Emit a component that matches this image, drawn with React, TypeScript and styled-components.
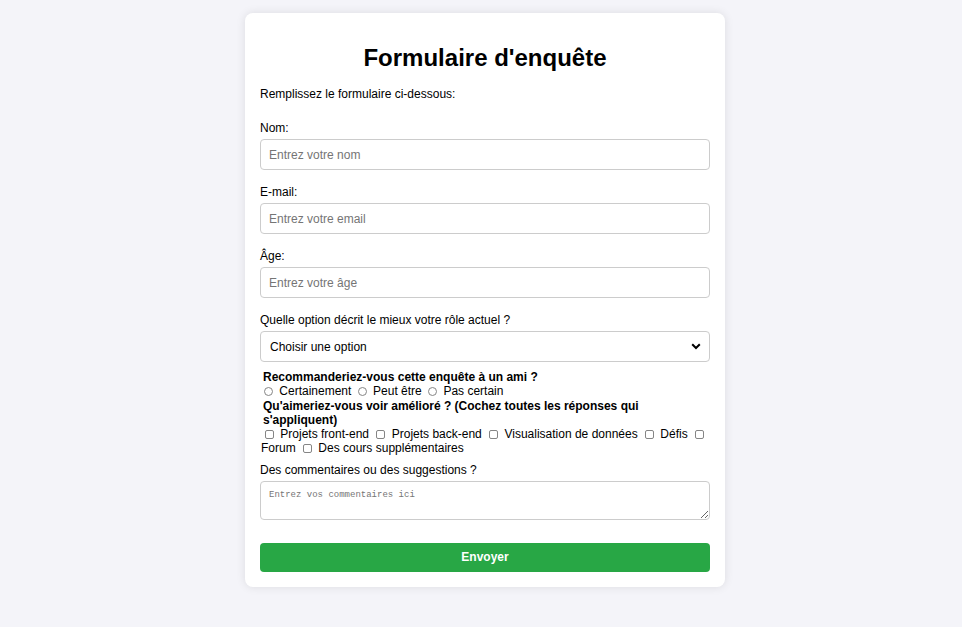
import React from 'react';
import styled, { createGlobalStyle } from 'styled-components';

const GlobalStyle = createGlobalStyle`
  html, body { margin: 0; padding: 0; background: #f4f4f9; }
  body { font-family: "Liberation Sans", Arial, sans-serif; font-size: 12px; color: #000; }
  * { box-sizing: border-box; }
`;

const Page = styled.div`
  display: flex;
  justify-content: center;
  padding: 13px 0 40px 8px;
`;

const Card = styled.form`
  width: 480px;
  background: #fff;
  border-radius: 8px;
  box-shadow: 0 0 10px rgba(0, 0, 0, 0.1);
  padding: 15px;
  display: flex;
  flex-direction: column;
`;

const Title = styled.h1`
  margin: 16px 0 16px;
  font-size: 24px;
  font-weight: bold;
  text-align: center;
  line-height: 27.6px;
`;

const Intro = styled.p`
  margin: 0 0 20px;
  line-height: 13.8px;
`;

const Group = styled.div<{ $gap?: number }>`
  display: flex;
  flex-direction: column;
  margin-bottom: ${(p) => (p.$gap ?? 15)}px;
`;

const Label = styled.label`
  display: block;
  line-height: 14px;
  margin-bottom: 4px;
`;

const TextInput = styled.input`
  width: 100%;
  height: 31px;
  padding: 0 8px;
  border: 1px solid #ccc;
  border-radius: 4px;
  font-family: "Liberation Sans", Arial, sans-serif;
  font-size: 12px;
  color: #000;
  outline: none;
  &::placeholder { color: #757575; }
`;

const SelectWrap = styled.div`
  position: relative;
  width: 100%;
`;

const Select = styled.select`
  appearance: none;
  width: 100%;
  height: 31px;
  padding: 0 8px 0 9px;
  border: 1px solid #ccc;
  border-radius: 4px;
  background: #fff;
  font-family: "Liberation Sans", Arial, sans-serif;
  font-size: 12px;
  color: #000;
  outline: none;
`;

const Chevron = styled.svg`
  position: absolute;
  right: 9px;
  top: 12px;
  pointer-events: none;
`;

const Questions = styled.div`
  line-height: 14.1px;
  padding-left: 1px;
  margin: 1px 0 8px;
`;

const Question = styled.div`
  font-weight: bold;
  padding-left: 2px;
`;

const Options = styled.div``;

const Radio = styled.input.attrs({ type: 'radio' })`
  appearance: none;
  display: inline-block;
  width: 9px;
  height: 9px;
  margin: 0 3px 0 3px;
  border: 1px solid #858585;
  border-radius: 50%;
  background: #fff;
  vertical-align: -1px;
`;

const Check = styled.input.attrs({ type: 'checkbox' })`
  appearance: none;
  display: inline-block;
  width: 9px;
  height: 9px;
  margin: 0 3px 0 4px;
  border: 1px solid #858585;
  border-radius: 2px;
  background: #fff;
  vertical-align: -1px;
`;

const TextArea = styled.textarea`
  width: 100%;
  height: 39px;
  padding: 8px;
  border: 1px solid #ccc;
  border-radius: 4px;
  font-family: "Liberation Mono", "Courier New", monospace;
  font-size: 9px;
  line-height: 10px;
  outline: none;
  resize: vertical;
  &::placeholder { color: #757575; }
`;

const Submit = styled.button`
  margin-top: 23px;
  width: 100%;
  height: 29px;
  border: none;
  border-radius: 4px;
  background: #28a745;
  color: #fff;
  font-family: "Liberation Sans", Arial, sans-serif;
  font-size: 12px;
  font-weight: bold;
  cursor: pointer;
`;

export default function App() {
  return (
    <>
      <GlobalStyle />
      <Page>
        <Card onSubmit={(e) => e.preventDefault()}>
          <Title>Formulaire d'enquête</Title>
          <Intro>Remplissez le formulaire ci-dessous:</Intro>

          <Group>
            <Label htmlFor="nom">Nom:</Label>
            <TextInput id="nom" type="text" placeholder="Entrez votre nom" />
          </Group>
          <Group>
            <Label htmlFor="email">E-mail:</Label>
            <TextInput id="email" type="email" placeholder="Entrez votre email" />
          </Group>
          <Group>
            <Label htmlFor="age">Âge:</Label>
            <TextInput id="age" type="number" placeholder="Entrez votre âge" />
          </Group>
          <Group $gap={7}>
            <Label htmlFor="role">Quelle option décrit le mieux votre rôle actuel ?</Label>
            <SelectWrap>
              <Select id="role" defaultValue="">
                <option value="">Choisir une option</option>
                <option value="etudiant">Étudiant</option>
                <option value="pro">Professionnel</option>
              </Select>
              <Chevron width="10" height="7" viewBox="0 0 10 7">
                <path d="M1.2 1.2 L5 5 L8.8 1.2" fill="none" stroke="#000" strokeWidth="2" />
              </Chevron>
            </SelectWrap>
          </Group>

          <Questions>
            <Question>Recommanderiez-vous cette enquête à un ami ?</Question>
            <Options>
              <label><Radio name="rec" /> Certainement</label>{' '}
              <label><Radio name="rec" /> Peut être</label>{' '}
              <label><Radio name="rec" /> Pas certain</label>
            </Options>
            <Question>Qu'aimeriez-vous voir amélioré ? (Cochez toutes les réponses qui s'appliquent)</Question>
            <Options>
              <Check /> Projets front-end{' '}
              <Check /> Projets back-end{' '}
              <Check /> Visualisation de données{' '}
              <Check /> Défis{' '}
              <Check /> Forum{' '}
              <Check /> Des cours supplémentaires
            </Options>
          </Questions>

          <Group $gap={0}>
            <Label htmlFor="comments">Des commentaires ou des suggestions ?</Label>
            <TextArea id="comments" placeholder="Entrez vos commentaires ici" />
          </Group>

          <Submit type="submit">Envoyer</Submit>
        </Card>
      </Page>
    </>
  );
}
